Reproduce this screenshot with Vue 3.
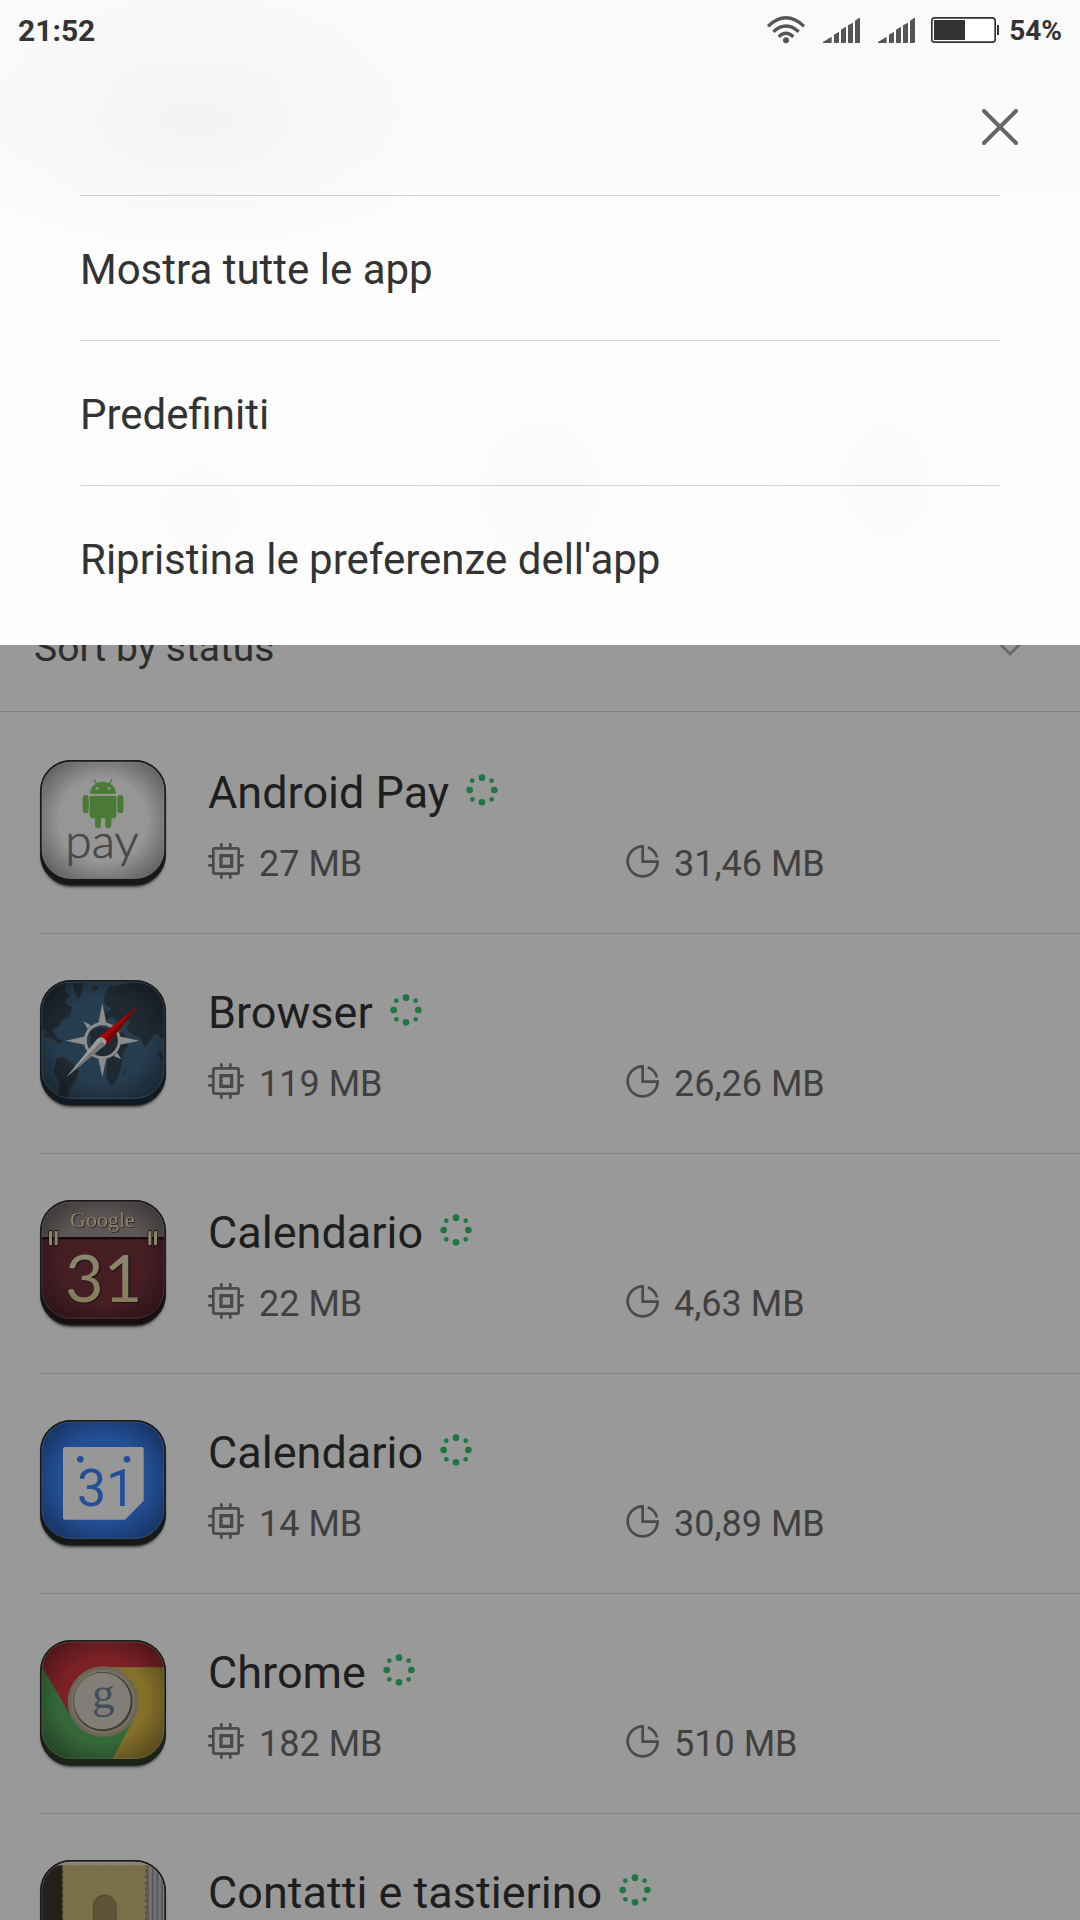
<template>
  <div class="screen">
    <section class="menu">
      <header class="status-bar">
        <span class="time">21:52</span>
        <div class="status-icons">
          <svg class="wifi" viewBox="0 0 114 84" aria-hidden="true">
            <g fill="none" stroke="#555" stroke-width="10">
              <path d="M3 31Q57 -20 111 31" />
              <path d="M19 47Q57 13 95 47" />
              <path d="M35 62Q57 42 79 62" />
            </g>
            <circle cx="57" cy="73" r="9" fill="#555" />
          </svg>
          <svg v-for="sim in 2" :key="sim" class="signal" viewBox="0 0 111 75" aria-hidden="true">
            <path
              d="M0 75V72L26 56V75ZM33 75V50L48 41V73L46 75ZM54 75V35L69 26V73L67 75ZM75 75V22L90 14V73L88 75ZM96 75V8L108 0H111V73L109 75Z"
              fill="#555"
            />
          </svg>
          <svg class="battery" viewBox="0 0 204 78" aria-hidden="true">
            <rect x="2.5" y="2.5" width="190" height="73" rx="9" fill="#fff" stroke="#333" stroke-width="5" />
            <rect x="9" y="9" width="93" height="60" fill="#333" />
            <rect x="198" y="24" width="6" height="30" fill="#333" />
          </svg>
          <span class="percent">54%</span>
        </div>
      </header>

      <div class="menu-head">
        <button class="close" type="button" aria-label="Chiudi">
          <svg viewBox="0 0 36 36" aria-hidden="true">
            <path d="M2 2L34 34M34 2L2 34" fill="none" stroke="#666" stroke-width="4" stroke-linecap="round" />
          </svg>
        </button>
      </div>

      <ul class="menu-list">
        <li v-for="item in menuItems" :key="item">
          <button type="button">{{ item }}</button>
        </li>
      </ul>
    </section>

    <button class="sort" type="button">
      <span>Sort by status</span>
      <svg viewBox="0 0 32 18" aria-hidden="true">
        <path d="M2 1L16 15L30 1" fill="none" stroke="#6b6b6b" stroke-width="3" />
      </svg>
    </button>

    <ul class="apps">
      <li v-for="(app, index) in apps" :key="index" class="app">
        <svg class="app-icon" viewBox="30 30 378 384" aria-hidden="true">
          <defs>
            <clipPath :id="'face' + index">
              <rect x="35" y="35" width="368" height="351" rx="88" />
            </clipPath>
            <radialGradient :id="'shade' + index" cx="0.5" cy="0.5" r="0.7">
              <stop offset="0.5" stop-color="#000" stop-opacity="0" />
              <stop offset="1" stop-color="#000" stop-opacity="0.5" />
            </radialGradient>
            <linearGradient :id="'gold' + index" x1="0" y1="0" x2="0" y2="1">
              <stop offset="0" stop-color="#8e8a78" />
              <stop offset="1" stop-color="#847a56" />
            </linearGradient>
          </defs>
          <rect class="drop" x="34" y="50" width="370" height="360" rx="90" />
          <rect x="31" y="31" width="376" height="375" rx="92" :fill="app.edge" />

          <g :clip-path="`url(#face${index})`">
            <template v-if="app.icon === 'pay'">
              <rect x="30" y="30" width="378" height="360" fill="#969696" />
              <rect x="30" y="30" width="378" height="360" :fill="`url(#shade${index})`" />
              <g fill="#4a7a35">
                <path d="M180 131A39 36 0 0 1 258 131Z" />
                <path d="M179 138H259V196Q259 205 250 205H188Q179 205 179 196Z" />
                <rect x="158" y="135" width="18" height="55" rx="9" />
                <rect x="262" y="135" width="18" height="55" rx="9" />
                <rect x="195" y="190" width="18" height="45" rx="9" />
                <rect x="226" y="190" width="18" height="45" rx="9" />
                <path d="M200 103L193 89M238 103L245 89" stroke="#4a7a35" stroke-width="4" stroke-linecap="round" />
              </g>
              <circle cx="201" cy="115" r="4" fill="#999" />
              <circle cx="237" cy="115" r="4" fill="#999" />
              <text x="106" y="324" class="t-pay">pay</text>
            </template>

            <template v-else-if="app.icon === 'browser'">
              <rect x="30" y="30" width="378" height="360" fill="#263d50" />
              <g fill="#1f2932" stroke="#343f49" stroke-width="2">
                <path d="M30 30H112L104 58L118 78L105 98L128 112L122 140L100 150L84 172L66 180L84 204L104 214L88 222L62 205L42 200L52 186L30 175Z" />
                <path d="M78 266L98 260L124 276L148 300L140 328L122 352L114 386L84 386L88 340L70 306Z" />
                <path d="M126 38H160L156 70L146 90L132 66Z" />
                <path d="M220 80L236 50L270 44L300 36H410V210L392 205L380 190L364 206L346 236L330 206L300 190L286 174L300 158L280 150L262 156L246 142L226 152L222 130L244 118L226 106Z" />
                <path d="M178 182L206 170L246 176L284 190L296 228L280 250L272 304L258 336L240 350L228 318L232 268L206 256L184 240Z" />
                <path d="M292 292L286 318L280 316L284 298Z" />
                <path d="M388 238L402 262L396 274L382 252Z" />
                <path d="M184 52L206 44L204 60L188 64Z" />
              </g>
              <rect x="30" y="30" width="378" height="360" :fill="`url(#shade${index})`" />
              <g fill="#8c8c8c">
                <path d="M217 100L230 164H204Z" />
                <path d="M217 322L230 260H204Z" />
                <path d="M106 212L168 199V225Z" />
                <path d="M328 212L266 199V225Z" />
                <path d="M160 154L183 166L173 177ZM274 154L251 166L261 177ZM274 268L251 258L261 247ZM160 268L183 258L173 247Z" />
              </g>
              <circle cx="217" cy="212" r="51" fill="none" stroke="#8c8c8c" stroke-width="9" />
              <path d="M324 108L208 200L232 224Z" fill="#a80505" />
              <path d="M324 108L220 212L232 224Z" fill="#780000" />
              <path d="M110 320L202 206Q216 194 230 214L226 224Z" fill="#9a9a9a" />
              <path d="M110 320L214 214L226 224Z" fill="#757575" />
            </template>

            <template v-else-if="app.icon === 'retro'">
              <rect x="30" y="30" width="378" height="360" fill="#451e24" />
              <rect x="30" y="30" width="378" height="112" fill="#5e5858" />
              <rect x="30" y="30" width="378" height="360" :fill="`url(#shade${index})`" />
              <rect x="30" y="141" width="378" height="7" fill="#170d0e" />
              <g v-for="x in [57, 74, 355, 372]" :key="x">
                <rect :x="x - 2" y="120" width="13" height="50" rx="5" fill="#1e1213" />
                <rect :x="x" y="123" width="9" height="43" rx="3" fill="#8a8468" />
              </g>
              <text x="120" y="112" class="t-google">Google</text>
              <text x="105" y="335" class="t-retro" :fill="`url(#gold${index})`">31</text>
            </template>

            <template v-else-if="app.icon === 'calendar'">
              <rect x="30" y="30" width="378" height="360" fill="#244f97" />
              <rect x="30" y="30" width="378" height="360" :fill="`url(#shade${index})`" />
              <path d="M105 111H335Q341 111 341 117V272L285 329H105Q99 329 99 323V117Q99 111 105 111Z" fill="#979797" />
              <circle cx="151" cy="148" r="10" fill="#244f97" />
              <circle cx="291" cy="148" r="10" fill="#244f97" />
              <text x="141" y="289" class="t-calendar">31</text>
            </template>

            <template v-else-if="app.icon === 'chrome'">
              <rect x="30" y="30" width="378" height="360" fill="#36693a" />
              <path d="M30 100V30H408V112H217L118 250Z" fill="#7b2126" />
              <path d="M217 112H408V400H240L310 270Z" fill="#85702a" />
              <rect x="30" y="30" width="378" height="360" :fill="`url(#shade${index})`" />
              <circle cx="219" cy="215" r="106" fill="#6c6657" />
              <circle cx="219" cy="215" r="96" fill="#777164" />
              <circle cx="219" cy="215" r="89" fill="#423c31" />
              <circle cx="217" cy="213" r="85" fill="#817e77" />
              <text x="186" y="235" class="t-chrome">g</text>
            </template>

            <template v-else>
              <rect x="30" y="30" width="378" height="360" fill="#777048" />
              <rect x="30" y="30" width="67" height="360" fill="#23201c" />
              <rect x="352" y="30" width="56" height="360" fill="#737375" />
              <path d="M354 30V390M368 30V390M382 30V390M396 30V390" stroke="#55555a" stroke-width="5" />
              <path d="M348 40V390M98 40V390" stroke="#4c472f" stroke-width="4" stroke-dasharray="10 8" />
              <path d="M120 60Q150 120 130 200M170 50Q200 110 180 180M250 50Q220 110 260 180M310 60Q280 120 320 200" fill="none" stroke="#7b744b" stroke-width="4" />
              <rect x="190" y="135" width="68" height="110" rx="34" fill="#5e5438" stroke="#4f482f" stroke-width="3" />
              <rect x="30" y="30" width="378" height="16" fill="#8b8471" />
            </template>
          </g>
          <rect x="36" y="36" width="366" height="349" rx="87" fill="none" stroke="#aaa" stroke-opacity="0.2" stroke-width="3" />
          <rect x="32" y="32" width="374" height="372" rx="91" fill="none" stroke="#1a1c1c" stroke-width="4" />
        </svg>

        <div class="info">
          <div class="title">
            <span class="name">{{ app.name }}</span>
            <svg class="running" viewBox="0 0 96 96" aria-hidden="true">
              <circle v-for="(dot, i) in dots" :key="i" :cx="dot.x" :cy="dot.y" :r="dot.r" fill="#1e7643" />
            </svg>
          </div>
          <div v-if="app.memory" class="stats">
            <div class="stat">
              <svg class="chip" viewBox="0 0 108 108" aria-hidden="true">
                <g fill="none" stroke="#4a4a4a" stroke-width="8">
                  <rect x="16" y="16" width="76" height="76" rx="4" />
                  <rect x="39" y="38" width="32" height="32" stroke-width="10" />
                  <path d="M40 4V14M67 4V14M40 94V104M67 94V104M4 40H14M4 67H14M94 40H104M94 67H104" stroke-linecap="round" />
                </g>
              </svg>
              <span>{{ app.memory }}</span>
            </div>
            <div class="stat">
              <svg class="pie" viewBox="0 0 99 99" aria-hidden="true">
                <g fill="none" stroke="#4a4a4a" stroke-width="8">
                  <path d="M50 50V4A45 45 0 1 0 95 50Z" />
                  <path d="M65 7A45 45 0 0 1 93 37" />
                </g>
              </svg>
              <span>{{ app.storage }}</span>
            </div>
          </div>
        </div>
      </li>
    </ul>
  </div>
</template>

<script setup>
const menuItems = ['Mostra tutte le app', 'Predefiniti', "Ripristina le preferenze dell'app"]

const apps = [
  { name: 'Android Pay', icon: 'pay', memory: '27 MB', storage: '31,46 MB', edge: '#141817' },
  { name: 'Browser', icon: 'browser', memory: '119 MB', storage: '26,26 MB', edge: '#101a22' },
  { name: 'Calendario', icon: 'retro', memory: '22 MB', storage: '4,63 MB', edge: '#170e0f' },
  { name: 'Calendario', icon: 'calendar', memory: '14 MB', storage: '30,89 MB', edge: '#141817' },
  { name: 'Chrome', icon: 'chrome', memory: '182 MB', storage: '510 MB', edge: '#1c2414' },
  { name: 'Contatti e tastierino', icon: 'contacts', edge: '#1c1c1a' }
]

// running indicator: big dots on the axes, small ones on the diagonals
const dots = [
  { x: 48, y: 11, r: 10 },
  { x: 77, y: 20, r: 7 },
  { x: 85, y: 48, r: 10 },
  { x: 77, y: 76, r: 7 },
  { x: 48, y: 85, r: 10 },
  { x: 19, y: 76, r: 7 },
  { x: 11, y: 48, r: 10 },
  { x: 19, y: 20, r: 7 }
]
</script>

<style>
body {
  margin: 0;
  background: #999;
}
</style>

<style scoped>
.screen {
  height: 100vh;
  overflow: hidden;
  background: #999;
  color: #333;
  font-family: Roboto, "Liberation Sans", sans-serif;
}

button {
  padding: 0;
  border: none;
  background: none;
  color: inherit;
  font: inherit;
  text-align: left;
  cursor: pointer;
}

ul {
  margin: 0;
  padding: 0;
  list-style: none;
}

svg {
  display: block;
  flex: none;
}

.menu {
  position: relative;
  z-index: 1;
  padding-bottom: 15px;
  background:
    radial-gradient(ellipse 260px 140px at 195px 120px, #f4f4f4, rgba(250, 250, 250, 0)),
    radial-gradient(ellipse 130px 150px at 50% 490px, #fafafa, rgba(253, 253, 253, 0)),
    radial-gradient(ellipse 120px 150px at 82% 480px, #f9fbfa, rgba(253, 253, 253, 0)),
    radial-gradient(ellipse 140px 160px at 200px 510px, #fafbfb, rgba(253, 253, 253, 0)),
    linear-gradient(#fafafa, #fbfbfb 150px, #fefefe 300px, #fefefe);
}

.status-bar {
  display: flex;
  align-items: center;
  justify-content: space-between;
  height: 60px;
  padding: 0 18px;
  font-size: 30px;
  font-weight: 700;
}

.status-icons {
  display: flex;
  align-items: center;
  gap: 18px;
}

.wifi {
  width: 38px;
  height: 28px;
}

.signal {
  width: 37px;
  height: 25px;
}

.battery {
  width: 68px;
  height: 26px;
  margin: 0 -8px 0 -2px;
}

.percent {
  font-size: 28px;
}

.menu-head {
  display: flex;
  justify-content: flex-end;
  padding: 49px 62px 50px;
}

.close svg {
  width: 36px;
  height: 36px;
}

.menu-list {
  padding: 0 80px;
  font-size: 42px;
}

.menu-list li {
  border-top: 1px solid #d4d6d6;
}

.menu-list button {
  display: block;
  width: 100%;
  height: 144px;
  padding-top: 2px;
}

.sort {
  display: flex;
  align-items: center;
  justify-content: space-between;
  width: 100%;
  height: 132px;
  margin-top: -65px;
  padding: 4px 54px 0 34px;
  border-bottom: 1px solid #828282;
  color: #2d2d2d;
  font-size: 39px;
}

.sort svg {
  width: 32px;
  height: 18px;
}

.apps {
  padding-top: 2px;
}

.app {
  display: flex;
  gap: 42px;
  height: 219px;
  margin-left: 40px;
  border-bottom: 1px solid #828282;
}

.app-icon {
  width: 126px;
  height: 128px;
  margin-top: 46px;
  overflow: visible;
}

.drop {
  fill: #222;
  filter: blur(5px);
}

.t-pay {
  fill: #484848;
  stroke: #484848;
  stroke-width: 2px;
  font: 300 144px Lato, sans-serif;
}

.t-google {
  fill: #8a8468;
  font: 400 66px "Liberation Serif", serif;
  filter: drop-shadow(2px 2px 1px #1b1213);
}

.t-retro {
  font: 400 200px Lato, sans-serif;
  filter: drop-shadow(4px 3px 1px #1b1213);
}

.t-calendar {
  fill: #244f97;
  font: 400 156px Roboto, sans-serif;
}

.t-chrome {
  fill: #414e5b;
  font: 400 136px "Liberation Serif", serif;
}

.info {
  flex: 1;
  padding-top: 50px;
}

.title {
  display: flex;
  align-items: center;
  gap: 17px;
}

.name {
  color: #1e1e1e;
  font-size: 45px;
  line-height: 58px;
}

.running {
  width: 32px;
  height: 32px;
  margin-bottom: 6px;
}

.stats {
  display: grid;
  grid-template-columns: 418px 1fr;
  margin-top: 18px;
}

.stat {
  display: flex;
  align-items: center;
  gap: 15px;
  color: #404040;
  font-size: 36px;
  line-height: 48px;
}

.chip {
  width: 36px;
  height: 36px;
  margin-bottom: 6px;
}

.pie {
  width: 33px;
  height: 33px;
  margin-bottom: 6px;
}
</style>
